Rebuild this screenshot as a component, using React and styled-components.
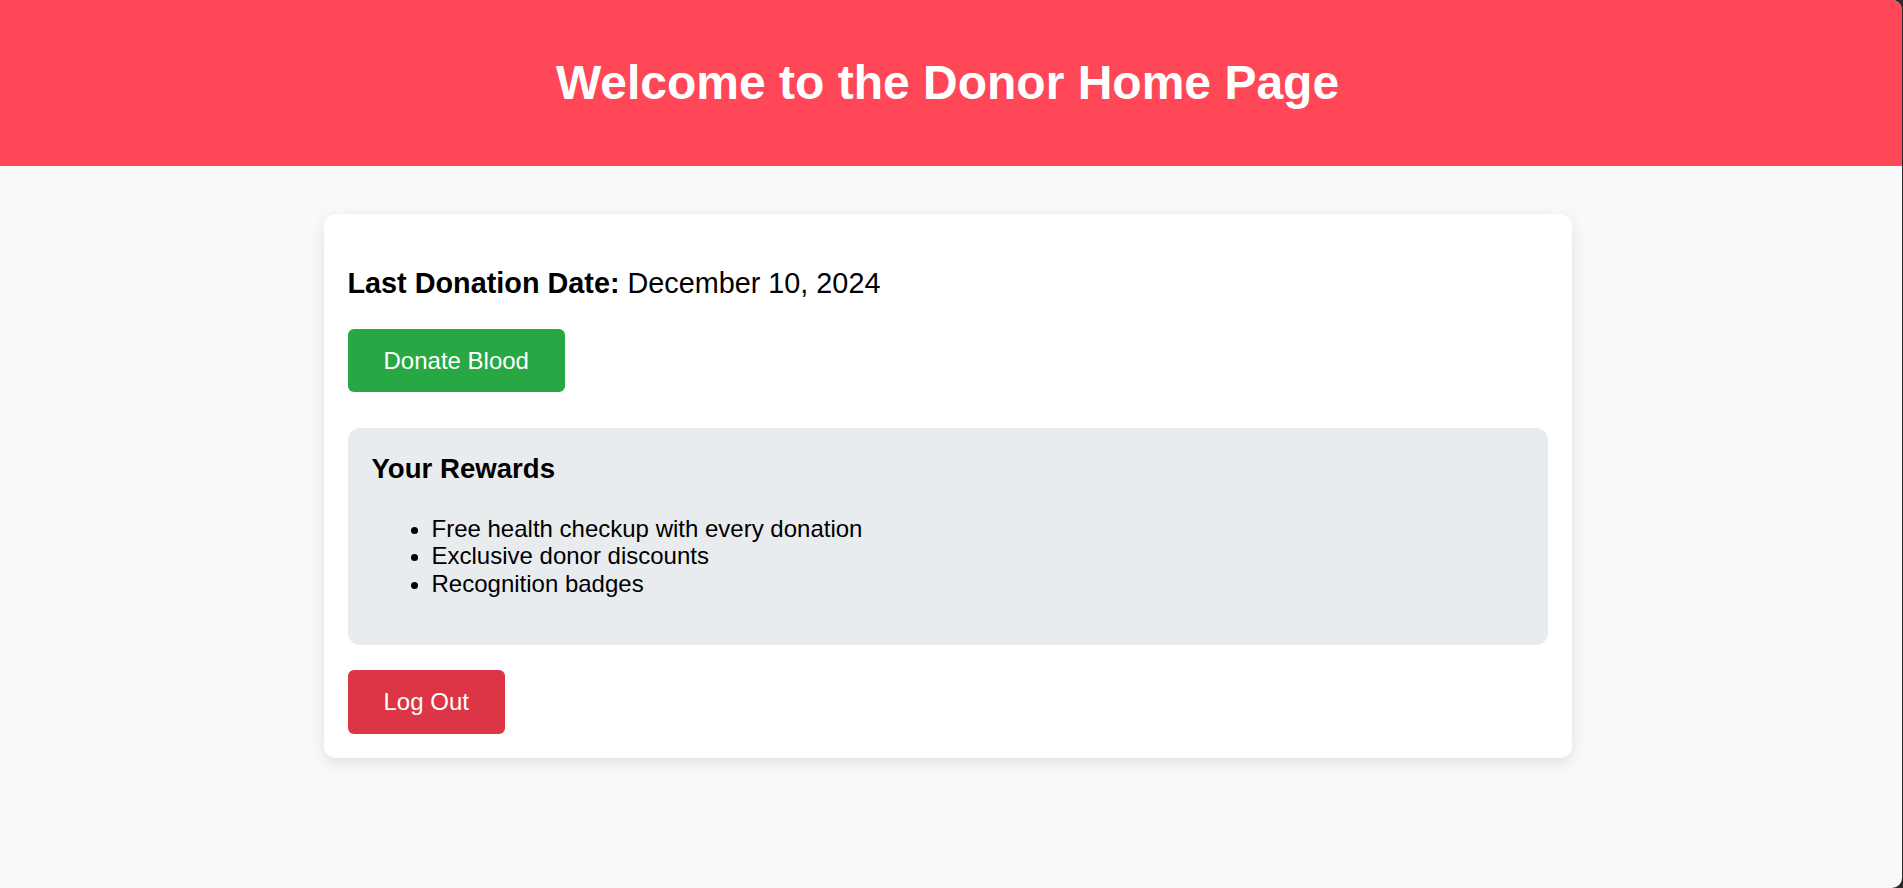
import styled, { createGlobalStyle } from 'styled-components';

const GlobalStyle = createGlobalStyle`
    html {
        background: #2b2b2b;
    }
    body {
        margin: 0;
        font-family: "Liberation Sans", Arial, sans-serif;
        color: #000;
    }
    #root {
        min-height: 100vh;
        margin-right: 1px;
        background: #f8f9fa;
        border-radius: 0 10px 10px 0;
        overflow: hidden;
    }
`;

const Header = styled.header`
    background: #ff4757;
    color: #fff;
    text-align: center;
    padding: 55px 7px 55px 0;
`;

const Title = styled.h1`
    margin: 0;
    font-size: 48px;
    line-height: 56px;
    font-weight: bold;
`;

const Main = styled.main`
    padding: 48px 7px 48px 0;
`;

const Card = styled.section`
    width: 1248px;
    margin: 0 auto;
    box-sizing: border-box;
    padding: 24px;
    background: #fff;
    border-radius: 12px;
    box-shadow: 0 5px 15px rgba(0, 0, 0, 0.1);
`;

const DateLine = styled.p`
    margin: 28.8px 0;
    font-size: 28.8px;
`;

const Button = styled.button`
    display: inline-block;
    padding: 18px 36px;
    border: none;
    border-radius: 6px;
    font-family: inherit;
    font-size: 24px;
    line-height: 27.6px;
    color: #fff;
    cursor: pointer;
    background: ${({ $variant }) => ($variant === 'danger' ? '#dc3545' : '#28a745')};
`;

const Rewards = styled.div`
    margin: 36px 0 25px;
    padding: 24px;
    background: #e9ecef;
    border-radius: 12px;
`;

const RewardsTitle = styled.h3`
    margin: 0.5px 0 30px;
    font-size: 27.6px;
`;

const RewardList = styled.ul`
    margin: 24px 0;
    padding-left: 60px;
    font-size: 24px;
    line-height: 27.6px;
`;

const rewards = [
    'Free health checkup with every donation',
    'Exclusive donor discounts',
    'Recognition badges',
];

function App() {
    return <>
        <GlobalStyle />
        <Header>
            <Title>Welcome to the Donor Home Page</Title>
        </Header>
        <Main>
            <Card>
                <DateLine>
                    <strong>Last Donation Date:</strong> December 10, 2024
                </DateLine>
                <Button>Donate Blood</Button>
                <Rewards>
                    <RewardsTitle>Your Rewards</RewardsTitle>
                    <RewardList>
                        {rewards.map(item => <li key={item}>{item}</li>)}
                    </RewardList>
                </Rewards>
                <Button $variant="danger">Log Out</Button>
            </Card>
        </Main>
    </>
}

export default App;
